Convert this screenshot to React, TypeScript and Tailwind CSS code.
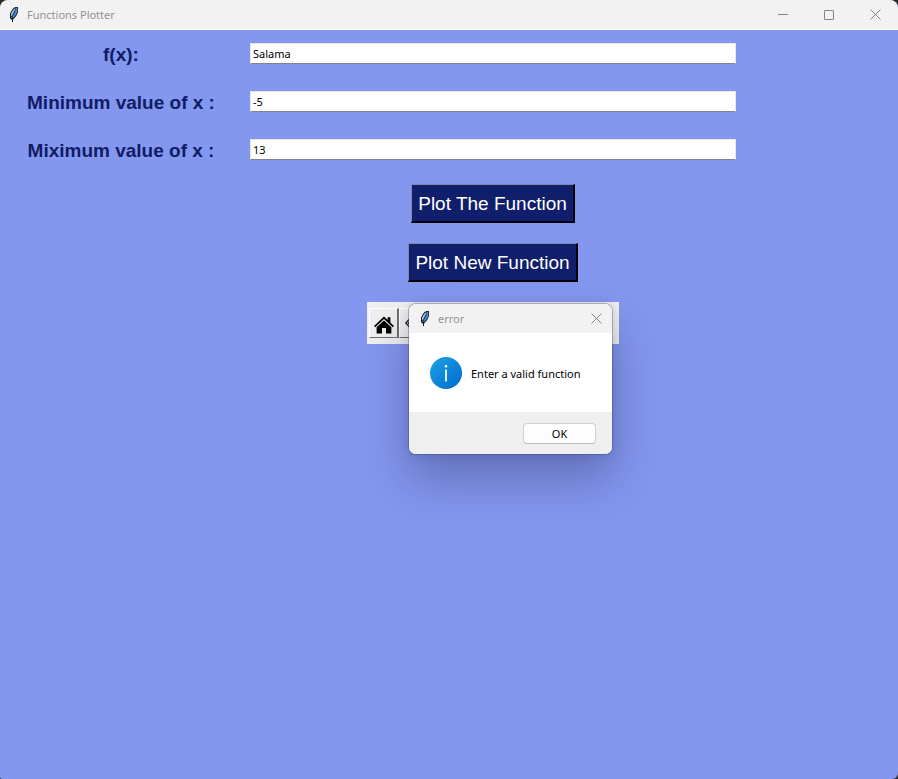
import type { ReactNode } from "react";

const uiFont = "font-['Noto_Sans','Open_Sans',sans-serif]";
const tkFont = "font-['Liberation_Sans',Arial,sans-serif]";

function Feather() {
  return (
    <svg width="16" height="16" viewBox="0 0 16 16" className="shrink-0" aria-hidden="true">
      <path d="M9.5 0H12V5L10.5 8.5 8.5 11 7 12.5V15H6V12.5H5L4 11V6.5L5.5 3.5 7.5 1Z" fill="#1c1c1c" />
      <path d="M9.6 1 8 2 6.2 4.2 5 6.8V9.5L6.2 8.5 8 5Z" fill="#9cc4ee" />
      <path d="M10.2 0.8H11.2V4.8L9.6 8 7.6 10.4 6 11.2 5.2 10.4 7 8 8.6 4.6Z" fill="#4b90e2" />
      <path d="M9.4 3.4 7.8 6.6 6.6 9.4 6.5 14" fill="none" stroke="#15202e" strokeWidth="0.7" />
    </svg>
  );
}

function CloseIcon() {
  return (
    <svg width="11" height="11" viewBox="0 0 11 11" aria-hidden="true">
      <path d="M0.5 0.5 10.5 10.5M10.5 0.5 0.5 10.5" fill="none" stroke="#858585" strokeWidth="1" />
    </svg>
  );
}

function TitleButton({ label, children }: { label: string; children: ReactNode }) {
  return (
    <button type="button" aria-label={label} className="flex h-7 w-[46px] items-center justify-center">
      {children}
    </button>
  );
}

function Field({ id, label, value }: { id: string; label: string; value: string }) {
  return (
    <div className="flex h-[21px] items-center gap-2">
      <label htmlFor={id} className={`${tkFont} w-[242px] shrink-0 pt-0.5 text-center text-[19px] leading-6 font-bold text-[#0f1c66]`}>
        {label}
      </label>
      <input
        id={id}
        defaultValue={value}
        className={`${uiFont} h-[21px] min-w-0 flex-1 border border-t-[#e8e8e8] border-r-[#e8e8e8] border-b-[#838383] border-l-[#e8e8e8] bg-white px-0.5 text-[11px] leading-4 text-black outline-none`}
      />
    </div>
  );
}

function PlotButton({ children }: { children: ReactNode }) {
  return (
    <button
      type="button"
      className={`${tkFont} h-[39px] border-t border-r-2 border-b-2 border-l border-t-[#8088ac] border-r-black border-b-black border-l-[#8088ac] bg-[#101f6b] px-1.5 pt-0.5 text-[19px] leading-6 text-white`}
    >
      {children}
    </button>
  );
}

function ErrorDialog() {
  return (
    <div
      role="dialog"
      aria-labelledby="error-title"
      className={`${uiFont} absolute top-px left-[41px] w-[205px] overflow-hidden rounded-lg border border-[#40406059] border-t-[#a9a9b0] bg-white bg-clip-padding shadow-[0_24px_48px_rgba(20,20,60,0.3),0_1px_10px_rgba(20,20,60,0.1)]`}
    >
      <div className="flex h-[29px] items-center bg-[#f2f2f2] pl-2">
        <Feather />
        <h2 id="error-title" className="ml-[5px] flex-1 text-[11px] leading-4 text-[#929292]">error</h2>
        <button type="button" aria-label="Close" className="flex h-7 w-8 items-center justify-center">
          <CloseIcon />
        </button>
      </div>
      <div className="flex h-[79px] items-center gap-[9px] pl-[21px]">
        <svg width="32" height="32" viewBox="0 0 32 32" className="shrink-0" aria-hidden="true">
          <defs>
            <linearGradient id="info" x1="0" y1="0" x2="1" y2="1">
              <stop offset="0" stopColor="#1ea3e6" />
              <stop offset="1" stopColor="#0069cc" />
            </linearGradient>
          </defs>
          <circle cx="16" cy="16" r="16" fill="url(#info)" />
          <circle cx="16" cy="9.2" r="1.3" fill="#fff" />
          <path d="M16 12.5V24.5" stroke="#fff" strokeWidth="1.7" />
        </svg>
        <p className="pt-0.5 text-[11px] leading-4 whitespace-nowrap text-black">Enter a valid function</p>
      </div>
      <div className="flex h-[42px] items-center justify-end bg-[#efefef] pr-4">
        <button type="button" className="h-[21px] w-[73px] rounded border border-[#d0d0d0] border-b-[#bcbcbc] bg-[#fdfdfd] pt-0.5 text-[11px] leading-4 text-black">
          OK
        </button>
      </div>
    </div>
  );
}

export default function App() {
  return (
    <div className="min-h-screen bg-[#2a2a2a]">
      <div className="flex min-h-screen flex-col overflow-hidden rounded-t-lg rounded-br-md rounded-bl-[2px] bg-[#8497ef]">
        <header className={`${uiFont} flex h-[30px] items-center border-b border-white bg-[#f2f2f2] pl-1.5`}>
          <Feather />
          <h1 className="ml-[5px] flex-1 text-[11px] leading-4 text-[#929292]">Functions Plotter</h1>
          <TitleButton label="Minimize">
            <svg width="10" height="10" viewBox="0 0 10 10" aria-hidden="true">
              <path d="M0 4.5H10" stroke="#858585" />
            </svg>
          </TitleButton>
          <TitleButton label="Maximize">
            <svg width="10" height="10" viewBox="0 0 10 10" aria-hidden="true">
              <rect x="0.5" y="0.5" width="9" height="9" rx="0.5" fill="none" stroke="#858585" />
            </svg>
          </TitleButton>
          <TitleButton label="Close">
            <CloseIcon />
          </TitleButton>
        </header>
        <main className="flex-1 pt-[13px] pr-[162px]">
          <form className="flex flex-col gap-[27px]">
            <Field id="fx" label="f(x):" value="Salama" />
            <Field id="min" label="Minimum value of x :" value="-5" />
            <Field id="max" label="Miximum value of x :" value="13" />
          </form>
          <div className="mt-6 flex flex-col items-center gap-5 pl-[250px]">
            <PlotButton>Plot The Function</PlotButton>
            <PlotButton>Plot New Function</PlotButton>
            <div className="relative flex h-[42px] w-[252px] items-center bg-[#f0f0f0] px-0.5">
              <button type="button" aria-label="Home" className="flex h-[30px] w-[30px] items-center justify-center border-t border-r-2 border-b border-l border-t-white border-r-[#6e6e6e] border-b-[#6e6e6e] border-l-white pt-1">
                <svg width="20" height="18" viewBox="0 0 20 18" aria-hidden="true">
                  <path d="M10 0.6 13.6 4V1.2H16.4V6.6L20 10 18.8 11.2 10 3 1.2 11.2 0 10Z" fill="#000" />
                  <path d="M10 4.4 17.4 11.2V17.4H12V12H8V17.4H2.6V11.2Z" fill="#000" />
                </svg>
              </button>
              <button type="button" aria-label="Back" className="flex h-[30px] w-[30px] items-center border-t border-r-2 border-b border-l border-t-white border-r-[#6e6e6e] border-b-[#6e6e6e] border-l-white pl-[5px]">
                <svg width="18" height="12" viewBox="0 0 18 12" aria-hidden="true">
                  <path d="M4.5 2 0.7 6 4.5 10M7 2 3.2 6 7 10M3 6H18" fill="none" stroke="#111" strokeWidth="1.1" />
                </svg>
              </button>
              <ErrorDialog />
            </div>
          </div>
        </main>
      </div>
    </div>
  );
}
